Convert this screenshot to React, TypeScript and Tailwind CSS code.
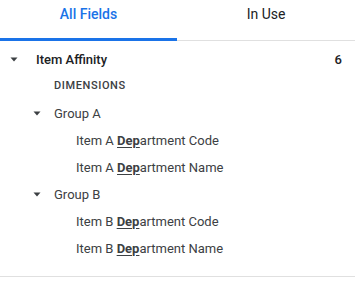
import React from 'react';

const Caret = () => (
  <svg width="8" height="5" viewBox="0 0 8 5" className="text-[#3c4043]">
    <path d="M0.5 0.5 L7.5 0.5 L4 4.5 Z" fill="currentColor" />
  </svg>
);

const Hit: React.FC<{ prefix: string; rest: string }> = ({ prefix, rest }) => (
  <span>
    {prefix}
    <span className="font-bold underline underline-offset-2">Dep</span>
    {rest}
  </span>
);

const App: React.FC = () => {
  const groups = [
    { name: 'Group A', items: ['Item A ', 'Item A '], suffix: ['artment Code', 'artment Name'] },
    { name: 'Group B', items: ['Item B ', 'Item B '], suffix: ['artment Code', 'artment Name'] },
  ];

  return (
    <div className="w-[355px] h-[303px] bg-white text-[#202124]" style={{ fontFamily: 'Roboto, "Liberation Sans", sans-serif' }}>
      {/* Tabs */}
      <div className="flex h-[41px] border-b border-[#e0e0e0]">
        <div className="relative w-[177px] flex items-center justify-center text-[14px] font-medium text-[#1a73e8] pb-[12px]">
          All Fields
          <div className="absolute left-0 right-0 bottom-[-1px] h-[3px] bg-[#1a73e8]" />
        </div>
        <div className="flex-1 flex items-center justify-center text-[14px] text-[#202124] pb-[12px]">In Use</div>
      </div>

      {/* Tree */}
      <div className="pt-[5px] pb-[14px] border-b border-[#e0e0e0] text-[13px] text-[#3c4043]">
        <div className="h-[27px] flex items-center pl-[10px] pr-[13px] text-[#202124]">
          <Caret />
          <span className="ml-[18px] font-medium text-[13px]">Item Affinity</span>
          <span className="ml-auto font-medium">6</span>
        </div>
        <div className="h-[27px] flex items-center pl-[54px] text-[11px] font-medium tracking-[0.6px] text-[#3c4043]">DIMENSIONS</div>
        {groups.map(g => (
          <React.Fragment key={g.name}>
            <div className="h-[27px] flex items-center pl-[33px]">
              <Caret />
              <span className="ml-[13px]">{g.name}</span>
            </div>
            {g.items.map((p, i) => (
              <div key={i} className="h-[27px] flex items-center pl-[76px]">
                <Hit prefix={p} rest={g.suffix[i]} />
              </div>
            ))}
          </React.Fragment>
        ))}
      </div>
    </div>
  );
};

export default App;
